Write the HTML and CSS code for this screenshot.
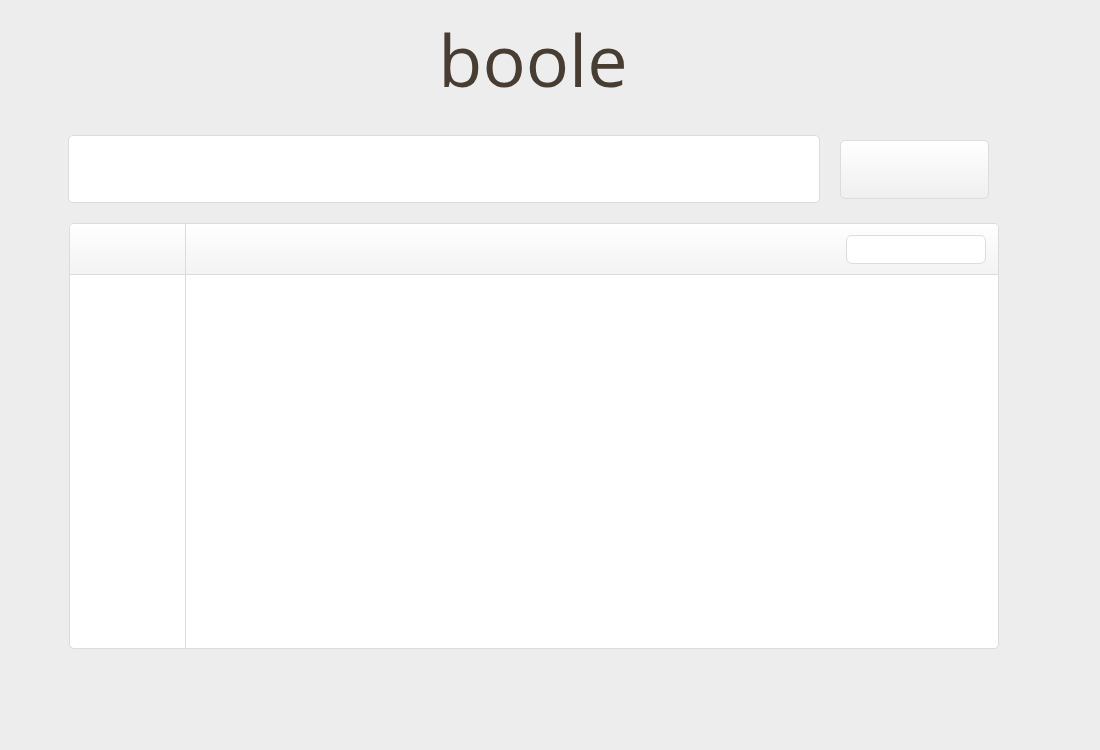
FILE: index.html
```html
<!DOCTYPE html>
<html lang="en">
<head>
<meta charset="utf-8">
<title>boole</title>
<link rel="stylesheet" href="styles.css">
</head>
<body>
<div class="page">
  <h1 class="title">boole</h1>
  <div class="query-row">
    <input class="query" type="text" aria-label="query">
    <button class="go" type="button"></button>
  </div>
  <div class="panel">
    <div class="panel-head">
      <div class="cell-side"></div>
      <div class="cell-main head-main">
        <input class="filter" type="text" aria-label="filter">
      </div>
    </div>
    <div class="panel-body">
      <div class="cell-side"></div>
      <div class="cell-main"></div>
    </div>
  </div>
</div>
</body>
</html>
```
FILE: styles.css
```css
html, body {
  margin: 0;
  padding: 0;
  background: #ededed;
  font-family: "Open Sans", "DejaVu Sans", sans-serif;
}

.page {
  width: 932px;
  margin-left: 68px;
  padding-bottom: 40px;
}

.title {
  margin: 9px 0 0 0;
  height: 126px;
  font-size: 72px;
  line-height: 100px;
  font-weight: 400;
  color: #483d33;
  text-align: center;
  padding-right: 2px;
}

.query-row {
  display: flex;
  align-items: center;
  gap: 20px;
}

.query {
  box-sizing: border-box;
  width: 752px;
  height: 68px;
  margin: 0;
  border: 1px solid #dcdcdc;
  border-radius: 5px;
  background: #fff;
  outline: none;
  padding: 0 12px;
}

.go {
  box-sizing: border-box;
  width: 149px;
  height: 59px;
  margin: 0;
  border: 1px solid #dcdcdc;
  border-radius: 5px;
  background: linear-gradient(#ffffff, #efefef);
  padding: 0;
}

.panel {
  box-sizing: border-box;
  width: 930px;
  height: 426px;
  margin: 20px 0 0 1px;
  border: 1px solid #dcdcdc;
  border-radius: 5px;
  background: #fff;
  display: flex;
  flex-direction: column;
  overflow: hidden;
}

.panel-head {
  display: flex;
  height: 51px;
  box-sizing: border-box;
  border-bottom: 1px solid #dcdcdc;
  background: linear-gradient(#ffffff, #f3f3f3);
}

.panel-body {
  display: flex;
  flex: 1;
}

.cell-side {
  box-sizing: border-box;
  width: 116px;
  border-right: 1px solid #dcdcdc;
}

.cell-main {
  flex: 1;
}

.head-main {
  display: flex;
  justify-content: flex-end;
  align-items: center;
  padding: 1px 12px 0 0;
}

.filter {
  box-sizing: border-box;
  width: 140px;
  height: 29px;
  margin: 0;
  border: 1px solid #dcdcdc;
  border-radius: 6px;
  background: #fff;
  outline: none;
}
```
